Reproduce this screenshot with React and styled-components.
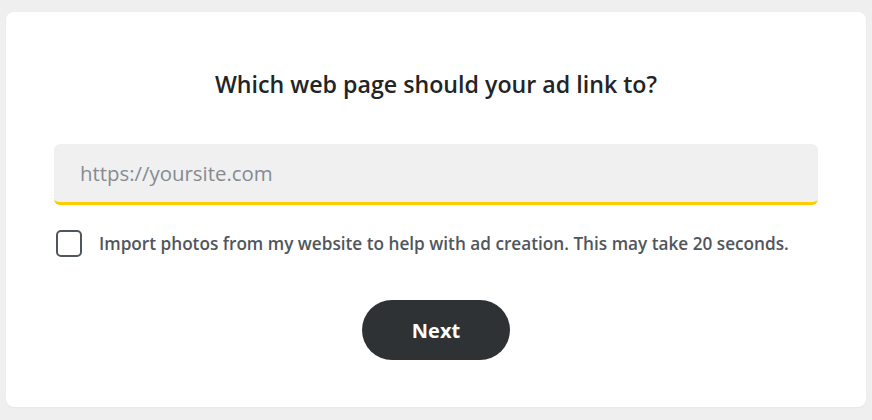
import React from 'react';
import styled, {createGlobalStyle} from 'styled-components';

const GlobalStyle = createGlobalStyle`
    html, body {
        margin: 0;
        padding: 0;
        background: #efefef;
    }
    body {
        font-family: "Open Sans", "Noto Sans", "Liberation Sans", sans-serif;
    }
    * {
        box-sizing: border-box;
    }
`

const App = () => {
    const [url, setUrl] = React.useState('');
    const [importPhotos, setImportPhotos] = React.useState(false);

    return (
        <Page>
            <GlobalStyle/>
            <Card>
                <Title>Which web page should your ad link to?</Title>
                <UrlInput
                    type='text'
                    placeholder='https://yoursite.com'
                    value={url}
                    onChange={e => setUrl(e.target.value)}
                />
                <CheckRow>
                    <CheckBox
                        type='checkbox'
                        checked={importPhotos}
                        onChange={e => setImportPhotos(e.target.checked)}
                    />
                    <span>Import photos from my website to help with ad creation. This may take 20 seconds.</span>
                </CheckRow>
                <ButtonRow>
                    <NextButton>Next</NextButton>
                </ButtonRow>
            </Card>
        </Page>
    );
};

const Page = styled.div`
    width: 872px;
    height: 420px;
    padding: 12px 6px 13px 6px;
`

const Card = styled.div`
    height: 395px;
    background: #ffffff;
    border-radius: 8px;
    box-shadow: 0 1px 2px rgba(0, 0, 0, 0.04);
    padding: 58px 48px 0 48px;
    display: flex;
    flex-direction: column;
`

const Title = styled.h2`
    margin: 0 0 46px 0;
    text-align: center;
    font-size: 23.2px;
    font-weight: 600;
    line-height: 28px;
    color: #222426;
`

const UrlInput = styled.input`
    width: 100%;
    height: 61px;
    border: 0;
    border-bottom: 3px solid #ffcc00;
    border-radius: 6px;
    background: #f0f0f0;
    padding: 0 26px;
    font-family: inherit;
    font-size: 20.4px;
    color: #2e3235;
    outline: none;
    &::placeholder {
        color: #858b91;
    }
`

const CheckRow = styled.label`
    margin-top: 25px;
    margin-left: 2px;
    display: flex;
    align-items: center;
    gap: 17px;
    font-size: 17.2px;
    font-weight: 600;
    color: #50565c;
    cursor: pointer;
`

const CheckBox = styled.input`
    appearance: none;
    margin: 0;
    width: 26px;
    height: 27px;
    border: 2px solid #50565c;
    border-radius: 5px;
    background: #ffffff;
    flex-shrink: 0;
    &:checked {
        background: #50565c;
    }
`

const ButtonRow = styled.div`
    margin-top: 43px;
    display: flex;
    justify-content: center;
`

const NextButton = styled.button`
    width: 148px;
    height: 60px;
    border: 0;
    border-radius: 30px;
    background: #2e3235;
    color: #ffffff;
    font-family: inherit;
    font-size: 20px;
    font-weight: 700;
    cursor: pointer;
`

export default App;
